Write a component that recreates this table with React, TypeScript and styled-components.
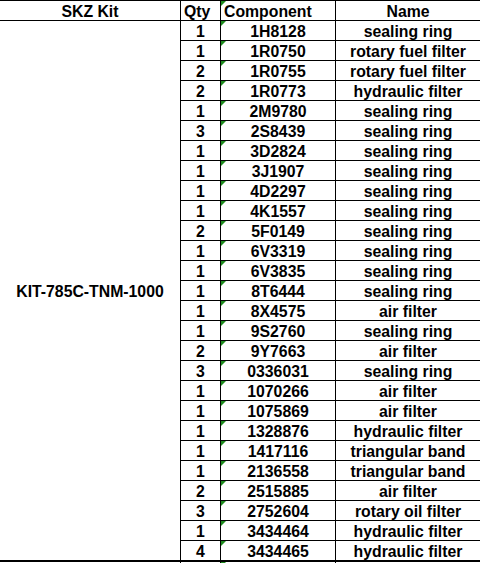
import React from "react";
import styled, { createGlobalStyle, css } from "styled-components";

const Global = createGlobalStyle`
  html, body { margin: 0; padding: 0; background: #fff; overflow: hidden; }
  body { width: 480px; height: 563px; }
`;

const rows: [string, string, string][] = [
  ["1", "1H8128", "sealing ring"],
  ["1", "1R0750", "rotary fuel filter"],
  ["2", "1R0755", "rotary fuel filter"],
  ["2", "1R0773", "hydraulic filter"],
  ["1", "2M9780", "sealing ring"],
  ["3", "2S8439", "sealing ring"],
  ["1", "3D2824", "sealing ring"],
  ["1", "3J1907", "sealing ring"],
  ["1", "4D2297", "sealing ring"],
  ["1", "4K1557", "sealing ring"],
  ["2", "5F0149", "sealing ring"],
  ["1", "6V3319", "sealing ring"],
  ["1", "6V3835", "sealing ring"],
  ["1", "8T6444", "sealing ring"],
  ["1", "8X4575", "air filter"],
  ["1", "9S2760", "sealing ring"],
  ["2", "9Y7663", "air filter"],
  ["3", "0336031", "sealing ring"],
  ["1", "1070266", "air filter"],
  ["1", "1075869", "air filter"],
  ["1", "1328876", "hydraulic filter"],
  ["1", "1417116", "triangular band"],
  ["1", "2136558", "triangular band"],
  ["2", "2515885", "air filter"],
  ["3", "2752604", "rotary oil filter"],
  ["1", "3434464", "hydraulic filter"],
  ["4", "3434465", "hydraulic filter"],
];

const Sheet = styled.div`
  display: grid;
  grid-template-columns: 181px 40px 115px 144px;
  grid-template-rows: 21px repeat(26, 20px) 21px 20px;
  width: 480px;
  font-family: "Liberation Sans", Arial, sans-serif;
  font-weight: bold;
  font-size: 15.8px;
  color: #000;
`;

const Cell = styled.div<{ $right?: boolean; $head?: boolean; $last?: boolean; $align?: "left" | "center" }>`
  position: relative;
  box-sizing: border-box;
  display: flex;
  align-items: center;
  justify-content: ${(p) => (p.$align === "left" ? "flex-start" : "center")};
  padding-left: ${(p) => (p.$align === "left" ? "3px" : "0")};
  padding-top: 2px;
  white-space: nowrap;
  overflow: hidden;
  border-bottom: ${(p) => (p.$last ? "2px" : "1px")} solid #000;
  ${(p) => p.$right && css`border-right: 1px solid #000;`}
  ${(p) => p.$head && css`border-top: 1px solid #000;`}
`;

const KitCell = styled(Cell)`
  grid-column: 1;
  grid-row: 2 / span 27;
`;

const StubCell = styled.div<{ $right?: boolean }>`
  position: relative;
  box-sizing: border-box;
  ${(p) => p.$right && css`border-right: 1px solid #000;`}
`;

const Flag = styled.span`
  position: absolute;
  left: 0;
  top: 0;
  width: 5px;
  height: 5px;
  background: #1d8a1d;
  clip-path: polygon(0 0, 100% 0, 0 100%);
`;

export default function App() {
  return (
    <>
      <Global />
      <Sheet>
        <Cell $head $right>SKZ Kit</Cell>
        <Cell $head $right $align="left">Qty</Cell>
        <Cell $head $right $align="left">
          <Flag />
          Component
        </Cell>
        <Cell $head>Name</Cell>
        <KitCell $right $last>KIT-785C-TNM-1000</KitCell>
        {rows.map(([q, c, n], i) => {
          const last = i === rows.length - 1;
          return (
            <React.Fragment key={c}>
              <Cell $right $last={last}>{q}</Cell>
              <Cell $right $last={last}>
                <Flag />
                {c}
              </Cell>
              <Cell $last={last}>{n}</Cell>
            </React.Fragment>
          );
        })}
        <StubCell $right />
        <StubCell $right />
        <StubCell $right>
          <Flag />
        </StubCell>
        <StubCell />
      </Sheet>
    </>
  );
}
